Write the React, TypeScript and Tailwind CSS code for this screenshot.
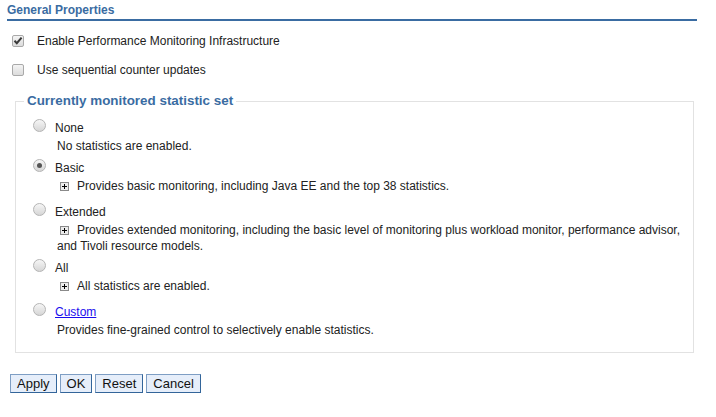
import React from "react";

const Check = ({ checked }: { checked?: boolean }) => (
  <span className="flex h-[12px] w-[12px] items-center justify-center rounded-[2px] border border-[#a9a9a9] bg-gradient-to-b from-[#f4f4f4] to-[#dcdcdc]">
    {checked && (
      <svg width="10" height="9" viewBox="0 0 10 9">
        <path d="M1.5 4.8 L3.8 7.2 L8.6 1.6" fill="none" stroke="#3a3a3a" strokeWidth="2" />
      </svg>
    )}
  </span>
);

const Radio = ({ checked }: { checked?: boolean }) => (
  <span className="flex h-[13px] w-[13px] shrink-0 items-center justify-center rounded-full border border-[#b4b4b4] bg-gradient-to-b from-[#f6f6f6] to-[#d6d6d6]">
    {checked && <span className="h-[5px] w-[5px] rounded-full bg-[#555]" />}
  </span>
);

const Plus = () => (
  <span className="relative mr-[8px] ml-[3px] inline-block h-[9px] w-[9px] border border-[#8a8a8a] bg-[#ececec] align-[-1px]">
    <span className="absolute top-[3px] left-[1px] h-[1px] w-[5px] bg-black" />
    <span className="absolute top-[1px] left-[3px] h-[5px] w-[1px] bg-black" />
  </span>
);

type Opt = {
  label: string;
  desc: string;
  plus?: boolean;
  checked?: boolean;
  link?: boolean;
  mt: string;
};

const options: Opt[] = [
  { label: "None", desc: "No statistics are enabled.", mt: "mt-0" },
  {
    label: "Basic",
    desc: "Provides basic monitoring, including Java EE and the top 38 statistics.",
    plus: true,
    checked: true,
    mt: "mt-[6px]",
  },
  {
    label: "Extended",
    desc: "Provides extended monitoring, including the basic level of monitoring plus workload monitor, performance advisor, and Tivoli resource models.",
    plus: true,
    mt: "mt-[10px]",
  },
  { label: "All", desc: "All statistics are enabled.", plus: true, mt: "mt-[6px]" },
  {
    label: "Custom",
    desc: "Provides fine-grained control to selectively enable statistics.",
    link: true,
    mt: "mt-[10px]",
  },
];

const Btn = ({ children }: { children: React.ReactNode }) => (
  <button className="h-[19px] border border-t-[#7e9ec4] border-l-[#7e9ec4] border-r-[#33659a] border-b-[#33659a] bg-[#e6eefa] px-[6px] text-[13px] leading-[16px] text-[#111]">
    {children}
  </button>
);

export default function App() {
  return (
    <div className="min-h-[417px] w-[716px] bg-white font-['Liberation_Sans',Arial,sans-serif] text-[12px] text-[#222]">
      <div className="w-[697px] pt-[2px] pl-[7px]">
        <div className="h-[19px] border-b-2 border-[#3a6ca2] text-[12px] leading-[17px] font-bold text-[#3a6ca2]">
          General Properties
        </div>

        <div className="mt-[5px] flex h-[29px] items-center pl-[5px]">
          <Check checked />
          <span className="ml-[13px]">Enable Performance Monitoring Infrastructure</span>
        </div>
        <div className="flex h-[29px] items-center pl-[5px]">
          <Check />
          <span className="ml-[13px]">Use sequential counter updates</span>
        </div>

        <fieldset className="mt-[9px] ml-[8px] w-[679px] border border-[#e2e2e2] pb-[14px]">
          <legend className="ml-[8px] px-[3px] text-[13.4px] leading-[16px] font-bold text-[#3a6ca2]">
            Currently monitored statistic set
          </legend>
          <div className="mt-[11px] pl-[17px] pr-[10px]">
            {options.map((o) => (
              <div key={o.label} className={o.mt}>
                <div className="flex h-[16px] items-center">
                  <span className="-mt-[5px]">
                    <Radio checked={o.checked} />
                  </span>
                  <span
                    className={
                      o.link
                        ? "ml-[9px] text-[#1a0dee] underline"
                        : "ml-[9px]"
                    }
                  >
                    {o.label}
                  </span>
                </div>
                <div className="mt-[2px] pl-[24px] leading-[16px]">
                  {o.plus && <Plus />}
                  {o.desc}
                </div>
              </div>
            ))}
          </div>
        </fieldset>

        <div className="mt-[21px] flex gap-[3px] pl-[3px]">
          <Btn>Apply</Btn>
          <Btn>OK</Btn>
          <Btn>Reset</Btn>
          <Btn>Cancel</Btn>
        </div>
      </div>
    </div>
  );
}
